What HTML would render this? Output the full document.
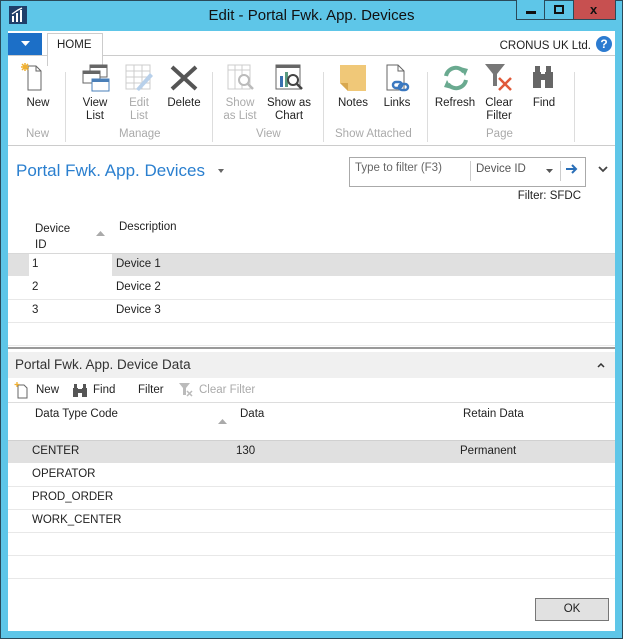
<!DOCTYPE html>
<html><head><meta charset="utf-8"><style>
*{margin:0;padding:0;box-sizing:border-box}
body{width:623px;height:639px;position:relative;overflow:hidden;background:#5ec6e8;font-family:"Liberation Sans",sans-serif;font-size:11.5px;color:#222}
.a{position:absolute}
.t{position:absolute;white-space:nowrap}
.lbl{position:absolute;text-align:center;font-size:11.5px;line-height:13px;color:#222}
.dis{color:#aaa}
.grp{position:absolute;top:128px;font-size:11.5px;color:#aaa;white-space:nowrap}
.sep{position:absolute;top:72px;width:1px;height:70px;background:#ddd}
.hl{position:absolute;left:8px;width:607px;height:1px;background:#e8e8e8}
</style></head><body>
<div class="a" style="left:0;top:0;width:623px;height:639px;border:1px solid #2a4a5a"></div>
<svg class="a" style="left:9px;top:6px" width="18" height="18"><rect width="18" height="18" fill="#1f3f6a"/><rect x="3" y="10" width="2" height="6" fill="#fff"/><rect x="7" y="7" width="2" height="9" fill="#fff"/><rect x="11" y="4" width="2" height="12" fill="#fff"/><path d="M3 8 L9 4 L13 2" stroke="#fff" stroke-width="1.3" fill="none"/></svg>
<div class="t" style="left:0;width:623px;text-align:center;top:7px;font-size:15px;color:#111">Edit - Portal Fwk. App. Devices</div>
<div class="a" style="left:516px;top:0;width:29px;height:20px;background:#5ec6e8;border:1px solid #2a4a5a;border-top:none"></div>
<div class="a" style="left:526px;top:11px;width:10px;height:3px;background:#111"></div>
<div class="a" style="left:545px;top:0;width:29px;height:20px;border:1px solid #2a4a5a;border-top:none;border-left:none"></div>
<div class="a" style="left:554px;top:5px;width:10px;height:9px;border:2px solid #111"></div>
<div class="a" style="left:574px;top:0;width:42px;height:20px;background:#c75050;border:1px solid #2a4a5a;border-top:none;border-left:none"></div>
<div class="t" style="left:590px;top:2px;font-size:13px;font-weight:bold;color:#111">x</div>
<div class="a" style="left:8px;top:31px;width:607px;height:600px;background:#fff"></div>
<div class="a" style="left:8px;top:33px;width:34px;height:22px;background:#1c6fc7"></div>
<svg class="a" style="left:21px;top:41px" width="9" height="6"><path d="M0 0H9L4.5 5Z" fill="#fff"/></svg>
<div class="a" style="left:47px;top:33px;width:56px;height:33px;border:1px solid #ccc;border-bottom:none;background:#fff"></div>
<div class="t" style="left:57px;top:39px">HOME</div>
<div class="a" style="left:8px;top:55px;width:39px;height:1px;background:#ccc"></div>
<div class="a" style="left:103px;top:55px;width:512px;height:1px;background:#ccc"></div>
<div class="t" style="right:32px;top:40px">CRONUS UK Ltd.</div>
<div class="a" style="left:596px;top:36px;width:16px;height:16px;border-radius:50%;background:#2c7bd0;color:#fff;font-weight:bold;font-size:12px;text-align:center;line-height:16px">?</div>
<svg class="a" style="left:20px;top:62px" width="24" height="30"><path d="M8 4H16L21 9V28H8Z" fill="#fff" stroke="#666"/><path d="M16 4V9H21" fill="none" stroke="#666"/><g stroke="#f0b030" stroke-width="1.5"><path d="M5 1V9M1 5H9M2 2L8 8M8 2L2 8"/></g></svg>
<svg class="a" style="left:80px;top:62px" width="32" height="30"><rect x="10" y="3" width="17" height="12" fill="#fff" stroke="#666"/><rect x="10" y="3" width="17" height="3" fill="#666"/><rect x="3" y="9" width="17" height="12" fill="#fff" stroke="#666"/><rect x="3" y="9" width="17" height="3" fill="#666"/><rect x="12" y="17" width="17" height="12" fill="#fff" stroke="#4a7fb8"/><rect x="12" y="17" width="17" height="3" fill="#4a7fb8"/></svg>
<svg class="a" style="left:124px;top:63px" width="30" height="30"><rect x="2" y="2" width="24" height="24" fill="#fff" stroke="#ccc"/><path d="M2 8H26M2 14H26M2 20H26M10 2V26M18 2V26" stroke="#ccc"/><path d="M12 26L26 10L29 13L15 28Z" fill="#b8d0ea"/></svg>
<svg class="a" style="left:168px;top:64px" width="32" height="28"><path d="M4 3L28 25M28 3L4 25" stroke="#555" stroke-width="4"/></svg>
<svg class="a" style="left:226px;top:63px" width="32" height="30"><rect x="2" y="2" width="22" height="24" fill="#fff" stroke="#ccc"/><path d="M2 7H24M9 2V26M16 2V26" stroke="#ccc"/><circle cx="18" cy="17" r="5" fill="#fff" stroke="#bbb" stroke-width="2"/><path d="M22 21L27 26" stroke="#bbb" stroke-width="2.5"/></svg>
<svg class="a" style="left:274px;top:63px" width="32" height="30"><rect x="2" y="2" width="24" height="24" fill="#fff" stroke="#666"/><rect x="2" y="2" width="24" height="3" fill="#666"/><rect x="6" y="13" width="3" height="11" fill="#3a70b0"/><rect x="11" y="9" width="3" height="15" fill="#5a9a80"/><circle cx="19" cy="17" r="5" fill="#fff" stroke="#444" stroke-width="2"/><path d="M23 21L28 26" stroke="#444" stroke-width="2.5"/></svg>
<svg class="a" style="left:338px;top:63px" width="30" height="30"><path d="M2 2H28V28H10L2 20Z" fill="#f0c878"/><path d="M2 20H10V28Z" fill="#d8a850"/></svg>
<svg class="a" style="left:384px;top:62px" width="28" height="32"><path d="M3 3H14L20 9V28H3Z" fill="#fff" stroke="#666"/><path d="M14 3V9H20" fill="none" stroke="#666"/><rect x="9" y="20" width="9" height="6" rx="3" fill="none" stroke="#3a78c0" stroke-width="2.5"/><rect x="15" y="22" width="9" height="6" rx="3" fill="none" stroke="#3a78c0" stroke-width="2.5"/></svg>
<svg class="a" style="left:441px;top:63px" width="30" height="30"><path d="M5 13A10 10 0 0 1 23 9" stroke="#6aaa90" stroke-width="4" fill="none"/><path d="M19 4L27 6L24 13Z" fill="#6aaa90"/><path d="M25 17A10 10 0 0 1 7 21" stroke="#6aaa90" stroke-width="4" fill="none"/><path d="M11 26L3 24L6 17Z" fill="#6aaa90"/></svg>
<svg class="a" style="left:484px;top:62px" width="32" height="32"><path d="M1 2H21L13 12V24H9V12Z" fill="#777"/><path d="M15 16L27 28M27 16L15 28" stroke="#e05a3a" stroke-width="2.5"/></svg>
<svg class="a" style="left:530px;top:64px" width="28" height="26"><path d="M3 8H11V24H3ZM15 8H23V24H15Z" fill="#666"/><rect x="5" y="2" width="5" height="7" fill="#666"/><rect x="16" y="2" width="5" height="7" fill="#666"/><rect x="10" y="10" width="6" height="6" fill="#666"/></svg>
<div class="lbl" style="left:20px;top:97px;width:36px">New</div>
<div class="lbl" style="left:76px;top:97px;width:38px">View<br>List</div>
<div class="lbl dis" style="left:120px;top:97px;width:38px">Edit<br>List</div>
<div class="lbl" style="left:164px;top:97px;width:40px">Delete</div>
<div class="lbl dis" style="left:220px;top:97px;width:40px">Show<br>as List</div>
<div class="lbl" style="left:264px;top:97px;width:50px">Show as<br>Chart</div>
<div class="lbl" style="left:334px;top:97px;width:38px">Notes</div>
<div class="lbl" style="left:378px;top:97px;width:38px">Links</div>
<div class="lbl" style="left:432px;top:97px;width:46px">Refresh</div>
<div class="lbl" style="left:480px;top:97px;width:38px">Clear<br>Filter</div>
<div class="lbl" style="left:526px;top:97px;width:36px">Find</div>
<div class="grp" style="left:26px">New</div>
<div class="grp" style="left:119px">Manage</div>
<div class="grp" style="left:256px">View</div>
<div class="grp" style="left:335px">Show Attached</div>
<div class="grp" style="left:486px">Page</div>
<div class="sep" style="left:65px"></div>
<div class="sep" style="left:212px"></div>
<div class="sep" style="left:323px"></div>
<div class="sep" style="left:427px"></div>
<div class="sep" style="left:574px"></div>
<div class="hl" style="top:145px;background:#ccc"></div>
<div class="t" style="left:16px;top:161px;font-size:17px;color:#2a7fcf">Portal Fwk. App. Devices</div>
<svg class="a" style="left:218px;top:169px" width="6" height="4"><path d="M0 0H6L3 4Z" fill="#666"/></svg>
<div class="a" style="left:349px;top:157px;width:237px;height:30px;border:1px solid #aaa"></div>
<div class="t" style="left:355px;top:162px;color:#666">Type to filter (F3)</div>
<div class="a" style="left:470px;top:161px;width:1px;height:20px;background:#ccc"></div>
<div class="t" style="left:476px;top:163px;color:#555">Device ID</div>
<svg class="a" style="left:546px;top:169px" width="7" height="4"><path d="M0 0H7L3.5 4Z" fill="#555"/></svg>
<div class="a" style="left:560px;top:161px;width:1px;height:20px;background:#ccc"></div>
<svg class="a" style="left:565px;top:163px" width="13" height="12"><path d="M1 6H11M7 2L11 6L7 10" stroke="#2a6fb8" stroke-width="2" fill="none"/></svg>
<svg class="a" style="left:598px;top:166px" width="10" height="7"><path d="M1 1L5 5L9 1" stroke="#444" stroke-width="1.8" fill="none"/></svg>
<div class="t" style="right:42px;top:190px">Filter: SFDC</div>
<div class="t" style="left:35px;top:221px;line-height:16px">Device<br>ID</div>
<svg class="a" style="left:96px;top:231px" width="9" height="5"><path d="M0 5H9L4.5 0Z" fill="#aaa"/></svg>
<div class="t" style="left:119px;top:221px">Description</div>
<div class="hl" style="top:253px;background:#d8d8d8"></div>
<div class="a" style="left:8px;top:254px;width:607px;height:22px;background:#e0e0e0"></div>
<div class="a" style="left:29px;top:254px;width:83px;height:22px;background:#fff"></div>
<div class="t" style="left:32px;top:258px">1</div><div class="t" style="left:116px;top:258px">Device 1</div>
<div class="t" style="left:32px;top:281px">2</div><div class="t" style="left:116px;top:281px">Device 2</div>
<div class="hl" style="top:299px"></div>
<div class="t" style="left:32px;top:304px">3</div><div class="t" style="left:116px;top:304px">Device 3</div>
<div class="hl" style="top:322px"></div>
<div class="hl" style="top:345px;"></div>
<div class="a" style="left:8px;top:347px;width:607px;height:2px;background:#999"></div>
<div class="a" style="left:8px;top:352px;width:607px;height:26px;background:#f0f0f0"></div>
<div class="t" style="left:15px;top:357px;font-size:13.5px;color:#333">Portal Fwk. App. Device Data</div>
<svg class="a" style="left:597px;top:363px" width="8" height="5"><path d="M1 4L4 1L7 4" stroke="#333" stroke-width="1.5" fill="none"/></svg>
<svg class="a" style="left:14px;top:381px" width="14" height="18"><path d="M4 4H10L13 7V17H4Z" fill="#fff" stroke="#666"/><path d="M3 1V6M0.5 3.5H5.5" stroke="#f0b030" stroke-width="1.3"/></svg>
<div class="t" style="left:36px;top:384px">New</div>
<svg class="a" style="left:72px;top:383px" width="16" height="14"><path d="M1 5H6V14H1ZM10 5H15V14H10Z" fill="#555"/><rect x="2" y="1" width="3" height="5" fill="#555"/><rect x="11" y="1" width="3" height="5" fill="#555"/><rect x="6" y="6" width="4" height="4" fill="#555"/></svg>
<div class="t" style="left:93px;top:384px">Find</div>
<div class="t" style="left:138px;top:384px">Filter</div>
<svg class="a" style="left:178px;top:382px" width="16" height="16"><path d="M1 1H12L8 6V13H5V6Z" fill="#bbb"/><path d="M9 9L14 14M14 9L9 14" stroke="#bbb" stroke-width="1.5"/></svg>
<div class="t dis" style="left:199px;top:384px">Clear Filter</div>
<div class="hl" style="top:402px;background:#ddd"></div>
<div class="t" style="left:35px;top:408px">Data Type Code</div>
<svg class="a" style="left:218px;top:419px" width="9" height="5"><path d="M0 5H9L4.5 0Z" fill="#aaa"/></svg>
<div class="t" style="left:240px;top:408px">Data</div>
<div class="t" style="left:463px;top:408px">Retain Data</div>
<div class="hl" style="top:440px;background:#d0d0d0"></div>
<div class="a" style="left:8px;top:441px;width:607px;height:22px;background:#e0e0e0"></div>
<div class="t" style="left:32px;top:445px">CENTER</div>
<div class="t" style="left:236px;top:445px">130</div>
<div class="t" style="left:460px;top:445px">Permanent</div>
<div class="t" style="left:32px;top:468px">OPERATOR</div>
<div class="hl" style="top:486px"></div>
<div class="t" style="left:32px;top:491px">PROD_ORDER</div>
<div class="hl" style="top:509px"></div>
<div class="t" style="left:32px;top:514px">WORK_CENTER</div>
<div class="hl" style="top:532px"></div>
<div class="hl" style="top:555px"></div>
<div class="hl" style="top:578px"></div>
<div class="a" style="left:535px;top:598px;width:74px;height:23px;background:#e1e1e1;border:1px solid #777;text-align:center;line-height:21px">OK</div>
</body></html>
